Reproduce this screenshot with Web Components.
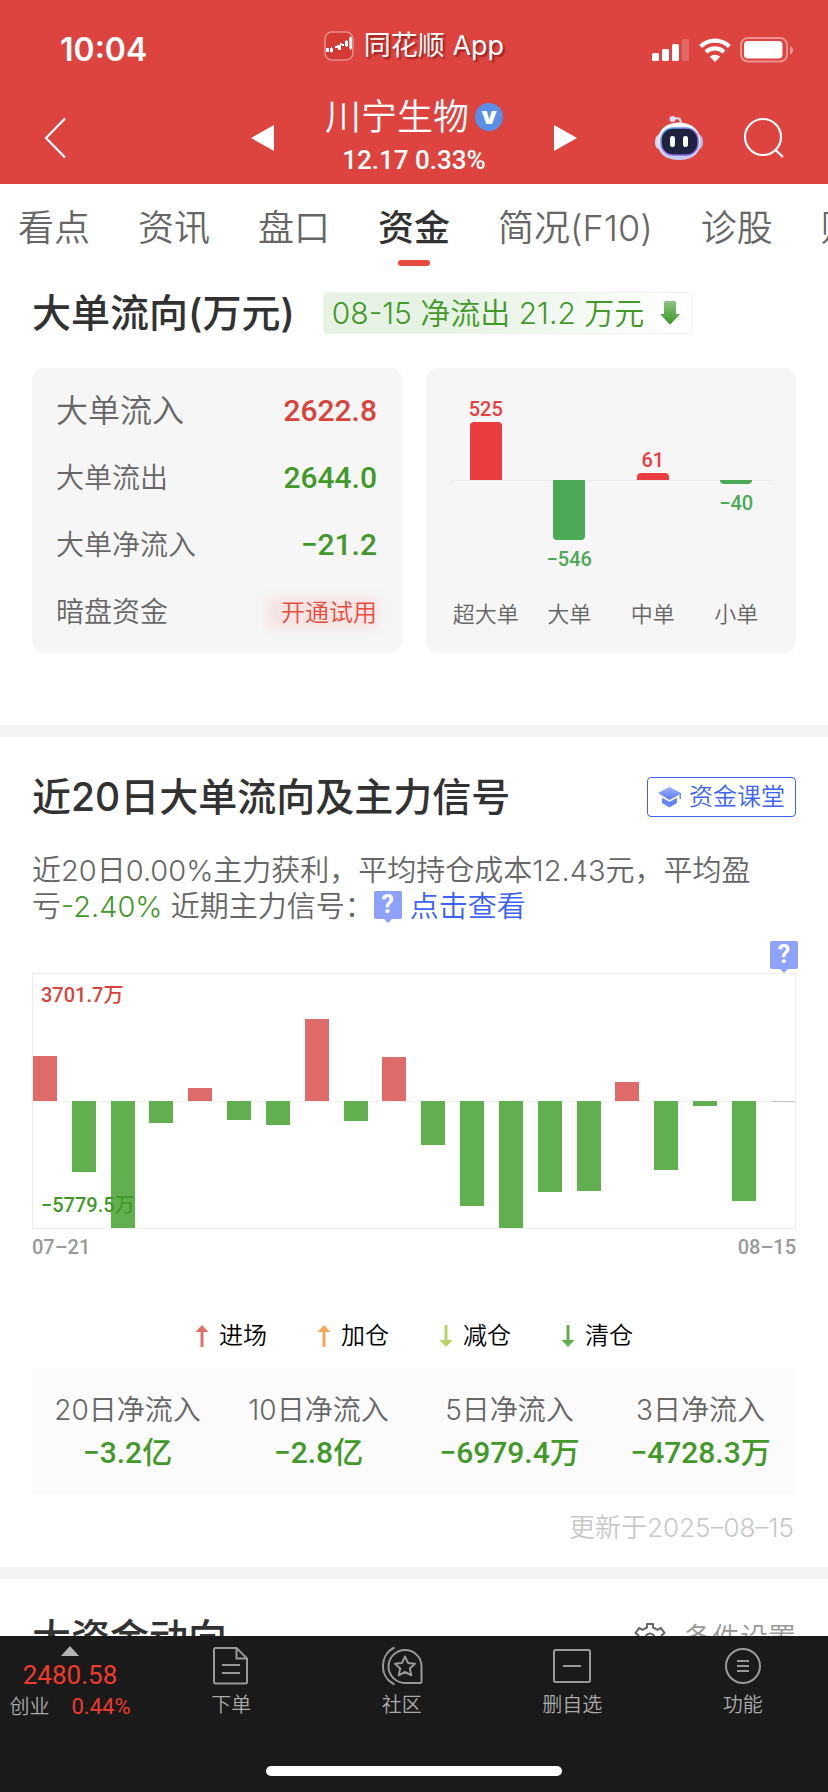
<!DOCTYPE html>
<html lang="zh-CN">
<head>
<meta charset="utf-8">
<meta name="viewport" content="width=device-width, initial-scale=1">
<title>川宁生物 资金</title>
<style>
  :root {
    --up: #d8433b;
    --down: #42992a;
    --ink: #323232;
    --muted: #666;
    --link: #3d63f5;
    --num: Roboto, "Noto Sans CJK SC", sans-serif;
  }
  body { margin: 0; background: #fff; font-family: Inter, "Noto Sans CJK SC", sans-serif; color: var(--ink); }
</style>
</head>
<body>
<stock-app></stock-app>

<script>
const reset = `
  *, *::before, *::after { box-sizing: border-box; }
  button { font: inherit; color: inherit; background: none; border: 0; padding: 0; margin: 0; cursor: pointer; }
  a { color: inherit; text-decoration: none; }
  svg { display: block; flex: none; }
  h1, h2, p, ul, dl, dt, dd { margin: 0; padding: 0; }
`;
function define(name, css, html, setup) {
  const tpl = document.createElement('template');
  tpl.innerHTML = `<style>${reset}${css}</style>${html}`;
  customElements.define(name, class extends HTMLElement {
    constructor() {
      super();
      this.attachShadow({ mode: 'open' }).append(tpl.content.cloneNode(true));
    }
    connectedCallback() {
      if (setup && !this.ready) { this.ready = true; setup(this, this.shadowRoot); }
    }
  });
}

/* Status bar */
define('status-bar', `
  :host { display: grid; grid-template-columns: 1fr auto 1fr; align-items: center; height: 92px; padding: 8px 34px 0; color: #fff; box-sizing: border-box; }
  .time { font-size: 32px; font-weight: 600; line-height: 40px; padding-left: 26px; }
  .app { display: flex; align-items: center; gap: 10px; font-size: 27px; line-height: 40px; text-shadow: 2px 2px 2px rgba(90,0,0,.55); padding-bottom: 8px; }
  .sys { display: flex; align-items: center; justify-content: flex-end; gap: 9px; }
`, `
  <span class="time">10:04</span>
  <span class="app">
    <svg width="30" height="30" viewBox="0 0 30 30"><rect x="1" y="1" width="28" height="28" rx="7" fill="#d53a34" stroke="#e88d89" stroke-width="1.6"/><g fill="#fff"><path d="M2 17h3v4H2zM11 15h3v2h-3zM13 14h4v5h-3v-3h-1zM16 12h2v1h2v2h-2v-1h-2zM21 10h3v5h-3zM22 9h1v7h-1z"/></g><path d="M6.5 17.500h2v3h-2zM7.500 16v6M25.800 6.500h1.600v11h-1.600zM26.600 5v14" fill="none" stroke="#fff" stroke-width="1"/></svg>
    <span>同花顺 App</span>
  </span>
  <span class="sys">
    <svg width="38" height="24" viewBox="0 0 38 24" fill="#fff"><rect x="0" y="15" width="7" height="8" rx="1.500"/><rect x="10" y="11" width="7" height="12" rx="1.500"/><rect x="20" y="6" width="7" height="17" rx="1.500"/><rect x="30" y="1" width="7" height="22" rx="1.500" opacity=".2"/></svg>
    <svg width="32" height="24" viewBox="0 0 32 24"><g fill="none" stroke="#fff" stroke-width="4.200"><path d="M1.600 8.600a20.500 20.500 0 0 1 28.800 0"/><path d="M7 14a13 13 0 0 1 18 0"/></g><path d="M16 24l-5.200-5.200a7.500 7.500 0 0 1 10.400 0z" fill="#fff"/></svg>
    <svg width="54" height="26" viewBox="0 0 54 26"><rect x="1" y="1" width="46" height="23.500" rx="7" fill="none" stroke="#fff" stroke-opacity=".42" stroke-width="2"/><rect x="4" y="4" width="38.500" height="17.500" rx="4" fill="#fff"/><path d="M50 9c4 1.500 4 7 0 8.500z" fill="#fff" opacity=".45"/></svg>
  </span>
`);

/* Stock title with previous / next controls */
define('stock-nav', `
  :host { display: grid; grid-template-columns: 1fr auto 1fr; align-items: center; height: 92px; padding: 0 44px; color: #fff; }
  .mid { display: grid; grid-template-columns: auto 188px auto; align-items: center; gap: 46px; }
  .name { text-align: center; padding-bottom: 6px; }
  h1 { display: flex; align-items: center; justify-content: center; gap: 6px; font-size: 36px; line-height: 50px; font-weight: 350; white-space: nowrap; }
  .v { width: 28px; height: 28px; border-radius: 50%; background: #5a8fe8; font-size: 24px; line-height: 26px; font-weight: 900; text-align: center; }
  .price { font: 500 26px/36px var(--num); white-space: nowrap; }
  .tools { display: flex; align-items: center; justify-content: flex-end; gap: 40px; }
`, `
  <button aria-label="返回"><svg width="22" height="42" viewBox="0 0 22 42" fill="none" stroke="#fff" stroke-width="2.200"><path d="M21 1.500L2 21l19 19.500"/></svg></button>
  <div class="mid">
    <button aria-label="上一只"><svg width="23" height="26" viewBox="0 0 23 26"><path d="M23 0v26L0 13z" fill="#fff"/></svg></button>
    <div class="name">
      <h1>川宁生物<span class="v">v</span></h1>
      <div class="price">12.17 0.33%</div>
    </div>
    <button aria-label="下一只"><svg width="23" height="26" viewBox="0 0 23 26"><path d="M0 0v26l23-13z" fill="#fff"/></svg></button>
  </div>
  <div class="tools">
    <button aria-label="智能助手"><svg width="50" height="46" viewBox="0 0 50 46"><defs><linearGradient id="s" x2="0" y2="1"><stop offset="0" stop-color="#fff"/><stop offset="1" stop-color="#c5c9ec"/></linearGradient><linearGradient id="e" x2="1" y2="1"><stop offset="0" stop-color="#58b9e8"/><stop offset=".5" stop-color="#9a6cf0"/><stop offset="1" stop-color="#6d5bd8"/></linearGradient></defs><path d="M20 4c5-2 7 0 7 5" fill="none" stroke="#d9dcf3" stroke-width="2"/><circle cx="18.500" cy="4" r="3" fill="#dadcf4"/><ellipse cx="4.500" cy="27" rx="3.500" ry="7" fill="#d7d9f3"/><ellipse cx="45.500" cy="27" rx="3.500" ry="7" fill="#b9bce8"/><path d="M25 7.500C39 7.500 46.500 16 46.500 27S39 45 25 45 3.500 38 3.500 27 11 7.500 25 7.500z" fill="url(#s)"/><rect x="7" y="13" width="37" height="27" rx="12" fill="#1e2340" stroke="url(#e)" stroke-width="1.500"/><rect x="16" y="21" width="5" height="11" rx="2.300" fill="#fff"/><rect x="29" y="21" width="5" height="11" rx="2.300" fill="#fff"/></svg></button>
    <button aria-label="搜索"><svg width="40" height="42" viewBox="0 0 40 42" fill="none" stroke="#fff" stroke-width="2.200"><circle cx="19" cy="20" r="18"/><path d="M31.500 33l7.500 7"/></svg></button>
  </div>
`);

/* Section tabs */
define('tab-bar', `
  :host { display: block; overflow: hidden; }
  nav { display: flex; gap: 48px; padding: 18px 0 4px 18px; }
  a { flex: none; display: flex; flex-direction: column; align-items: center; gap: 6px; font-size: 36px; line-height: 52px; font-weight: 350; color: var(--muted); white-space: nowrap; }
  a::after { content: ""; width: 32px; height: 6px; border-radius: 3px; }
  a[aria-current] { color: var(--ink); font-weight: 500; }
  a[aria-current]::after { background: #e84c3d; }
`, `<nav>
  <a href="#kd">看点</a><a href="#zx">资讯</a><a href="#pk">盘口</a><a href="#zj" aria-current="page">资金</a><a href="#f10">简况(F10)</a><a href="#zg">诊股</a><a href="#cw">财务</a>
</nav>`);

/* White content block with a title line and an extra control */
define('content-panel', `
  :host { display: block; padding: 0 32px; }
  header { display: flex; align-items: center; min-height: 40px; }
  h2 { font-size: 39px; line-height: 40px; font-weight: 500; white-space: nowrap; }
  :host([spread]) header { justify-content: space-between; }
  :host(:not([spread])) header { gap: 28px; }
`, `<header><h2><slot name="title"></slot></h2><slot name="extra"></slot></header><slot></slot>`);

define('flow-badge', `
  :host { display: flex; align-items: center; gap: 16px; height: 42px; padding: 0 12px 0 8px; border: 1px solid #edf5eb; border-radius: 4px; background: linear-gradient(100deg, #e6f2e4 35%, #fff 95%); color: var(--down); font-size: 30px; line-height: 40px; font-weight: 350; white-space: nowrap; box-sizing: border-box; }
`, `<slot></slot><svg width="20" height="24" viewBox="0 0 20 24"><defs><linearGradient id="g" x2="0" y2="1"><stop offset="0" stop-color="#8cc482"/><stop offset="1" stop-color="#3b9724"/></linearGradient></defs><path d="M5.500 0h9Q16 0 16 1.500V13h4L11 22.800q-1 1-2 0L0 13h4V1.500Q4 0 5.500 0z" fill="url(#g)"/></svg>`);

/* In and out totals */
define('flow-totals', `
  :host { display: block; padding: 9px 25px 8px 24px; border-radius: 12px; background: #f6f6f6; }
  dl > div { display: flex; align-items: center; justify-content: space-between; height: 67px; }
  dt { font-size: 28px; line-height: 40px; font-weight: 350; color: var(--muted); }
  div:first-child dt { font-size: 32px; }
  dd { font: 500 30px/40px var(--num); color: var(--down); }
  .up { color: var(--up); }
  button { position: relative; font: 350 24px/40px Inter, "Noto Sans CJK SC", sans-serif; color: #e84c3d; padding-left: 18px; }
  button::before { content: ""; position: absolute; inset: 4px 0 4px 4px; background: rgba(240,80,70,.1); filter: blur(6px); }
  button span { position: relative; }
`, `<dl>
  <div><dt>大单流入</dt><dd class="up">2622.8</dd></div>
  <div><dt>大单流出</dt><dd>2644.0</dd></div>
  <div><dt>大单净流入</dt><dd>−21.2</dd></div>
  <div><dt>暗盘资金</dt><dd><button><span>开通试用</span></button></dd></div>
</dl>`);

/* Net flow by order size; data attribute: name:value:barHeight */
define('order-chart', `
  :host { display: grid; grid-template-columns: repeat(4, 1fr); padding: 0 18px; border-radius: 12px; background: #f6f6f6; position: relative; }
  :host::before { content: ""; position: absolute; left: 24px; right: 24px; top: 112px; height: 1px; background: #ededed; }
  .col { display: flex; flex-direction: column; align-items: center; font: 500 20px/26px var(--num); position: relative; }
  .pos, .neg { display: flex; flex-direction: column; align-items: center; height: 112px; }
  .pos { justify-content: flex-end; color: #eb3d40; }
  .neg { gap: 6px; color: #4ca956; }
  .bar { width: 32px; background: currentColor; border-radius: 4px 4px 0 0; }
  .neg .bar { border-radius: 0 0 4px 4px; }
  .cat { font: 350 22px/40px "Noto Sans CJK SC", sans-serif; color: var(--muted); }
`, ``, (el, root) => {
  for (const item of el.getAttribute('data').split(',')) {
    const [name, value, h] = item.split(':');
    const up = !value.startsWith('−');
    const col = document.createElement('div');
    col.className = 'col';
    const bar = `<span class="bar" style="height:${h}px"></span>`;
    col.innerHTML = `<div class="pos">${up ? `<span>${value}</span>${bar}` : ''}</div><div class="neg">${up ? '' : `${bar}<span>${value}</span>`}</div><div class="cat">${name}</div>`;
    root.append(col);
  }
});

define('help-tip', `
  :host { display: inline-block; vertical-align: top; }
  button { position: relative; display: block; width: 28px; height: 28px; margin-bottom: 3px; border-radius: 2px; background: #8ea2fa; color: #fff; font: 700 25px/28px Roboto, sans-serif; text-align: center; }
  button::after { content: ""; position: absolute; left: 10px; top: 28px; border: 4px solid transparent; border-top-color: #8ea2fa; border-bottom: 0; }
`, `<button aria-label="说明">?</button>`);

define('class-button', `
  :host { display: block; }
  button { display: flex; align-items: center; gap: 8px; height: 40px; padding: 0 10px; border: 1px solid var(--link); border-radius: 4px; color: var(--link); font-size: 24px; line-height: 38px; font-weight: 350; white-space: nowrap; }
`, `<button><svg width="23" height="22" viewBox="0 0 23 22"><defs><linearGradient id="c" x2="0" y2="1"><stop offset="0" stop-color="#9db2fb"/><stop offset="1" stop-color="#5b7bf7"/></linearGradient></defs><path d="M11.500 1L23 7v6h-1.500V8.500L11.500 14 0 7z" fill="url(#c)"/><path d="M4 11.800l7.500 4 7.500-4V17l-7.500 4.500L4 17z" fill="#6785f8"/></svg><slot></slot></button>`);

define('signal-note', `
  :host { display: block; margin-top: 36px; padding-right: 30px; font-size: 29px; line-height: 36px; font-weight: 350; color: var(--muted); }
  .down { color: var(--down); }
  help-tip { margin: 2px 8px 0 0; height: 32px; }
  a { color: var(--link); }
`, `<p>近20日0.00%主力获利，平均持仓成本12.43元，平均盈亏<span class="down">-2.40%</span> 近期主力信号：<help-tip></help-tip><a href="#signal">点击查看</a></p>`);

/* Twenty-day bars around a zero line; positive values rise, negative values fall */
define('history-chart', `
  :host { display: block; font: 500 20px/28px var(--num); }
  .plot { position: relative; display: flex; justify-content: space-between; height: 256px; border: 1px solid #ececec; }
  .plot::before { content: ""; position: absolute; left: 0; right: 0; top: 127px; height: 1px; background: #f2f2f2; }
  .day { position: relative; width: 24px; display: flex; flex-direction: column; }
  .day i { display: block; }
  .max, .min { position: absolute; left: 8px; }
  .max { top: 7px; color: var(--up); }
  .min { bottom: 9px; color: var(--down); }
  .dates { display: flex; justify-content: space-between; margin-top: 4px; color: #999; }
`, `<div class="plot"></div><div class="dates"><span>07–21</span><span>08–15</span></div>`, (el, root) => {
  const plot = root.querySelector('.plot');
  for (const v of el.getAttribute('bars').split(',').map(Number)) {
    const day = document.createElement('div');
    day.className = 'day';
    day.innerHTML = `<i style="height:${127 - Math.max(v, 0)}px"></i><i style="height:${Math.abs(v)}px;background:${v > 0 ? '#de6b69' : v < -1 ? '#62af4f' : '#bcc9b8'}"></i>`;
    plot.append(day);
  }
  plot.insertAdjacentHTML('beforeend', '<span class="max">3701.7万</span><span class="min">−5779.5万</span>');
});

define('signal-legend', `
  :host { display: block; }
  ul { display: flex; justify-content: center; gap: 50px; margin-top: 59px; list-style: none; font-size: 24px; line-height: 32px; font-weight: 350; color: #000; }
  li { display: flex; align-items: center; gap: 10px; }
`, `<ul>
  <li><svg width="14" height="24" viewBox="0 0 14 24"><path d="M7 1l6.500 7H8.500v15h-3V8H.5z" fill="#e0706c"/></svg>进场</li>
  <li><svg width="14" height="24" viewBox="0 0 14 24"><path d="M7 1l6.500 7H8.500v15h-3V8H.5z" fill="#f2a65e"/></svg>加仓</li>
  <li><svg width="14" height="24" viewBox="0 0 14 24"><path d="M7 23l6.500-7H8.500V1h-3v15H.5z" fill="#b9d363"/></svg>减仓</li>
  <li><svg width="14" height="24" viewBox="0 0 14 24"><path d="M7 23l6.500-7H8.500V1h-3v15H.5z" fill="#62af4f"/></svg>清仓</li>
</ul>`);

define('period-stats', `
  :host { display: block; }
  dl { display: grid; grid-template-columns: repeat(4, 1fr); margin-top: 16px; padding: 22px 0 18px; background: #fbfbfb; text-align: center; }
  dt { font-size: 28px; line-height: 40px; font-weight: 350; color: var(--muted); }
  dd { font: 500 30px/46px var(--num); color: var(--down); }
  p { margin: 14px 2px 0 0; font-size: 26px; line-height: 40px; font-weight: 350; color: #c8c8c8; text-align: right; }
`, `<dl>
  <div><dt>20日净流入</dt><dd>−3.2亿</dd></div>
  <div><dt>10日净流入</dt><dd>−2.8亿</dd></div>
  <div><dt>5日净流入</dt><dd>−6979.4万</dd></div>
  <div><dt>3日净流入</dt><dd>−4728.3万</dd></div>
</dl><p>更新于2025–08–15</p>`);

define('settings-button', `
  :host { display: block; }
  button { display: flex; align-items: center; gap: 18px; font-size: 28px; line-height: 40px; font-weight: 350; color: #999; }
`, `<button><svg width="32" height="32" viewBox="0 0 32 32" fill="none" stroke="#666" stroke-width="2"><path d="M13 2h6v3.500l4.500 2.300L27 6l3.500 5-3 2.500v5l3 2.500-3.500 5-3.500-1.800-4.500 2.300V30h-6v-3.500l-4.500-2.300L5 26l-3.500-5 3-2.500v-5l-3-2.500L5 6l3.500 1.800L13 5.500z" stroke-linejoin="round"/><circle cx="16" cy="16" r="4.500"/></svg><slot></slot></button>`);

/* Bottom toolbar */
define('bottom-bar', `
  :host { display: flex; flex-direction: column; justify-content: space-between; align-items: center; height: 156px; padding: 10px 0 16px; background: #1a1a1a; color: #aaa; box-sizing: border-box; }
  nav { display: grid; grid-template-columns: 146px repeat(4, 1fr); align-items: start; width: 100%; font-size: 20px; font-weight: 350; }
  nav button { display: flex; flex-direction: column; align-items: center; gap: 5px; line-height: 28px; }
  .index { gap: 4px; padding-right: 6px; }
  .value { font: 400 26px/30px var(--num); color: #f03a2c; }
  .row { display: flex; align-items: center; gap: 22px; line-height: 26px; }
  .row span + span { font: 400 22px/26px var(--num); color: #f03a2c; }
  .home { width: 296px; height: 10px; border-radius: 5px; background: #fff; }
`, `<nav>
  <button class="index"><svg width="18" height="10" viewBox="0 0 18 10"><path d="M9 0l9 10H0z" fill="#b4b4b4"/></svg><span class="value">2480.58</span><span class="row"><span>创业</span><span>0.44%</span></span></button>
  <button><svg width="40" height="40" viewBox="0 0 40 40" fill="none" stroke="#999" stroke-width="2"><path d="M5 2h20.500L36 12.500V36a1.500 1.500 0 0 1-1.500 1.500H4.500A1.500 1.500 0 0 1 3 36V3.500A1.500 1.500 0 0 1 5 2zM25.500 2v10.500H36M11 19h18M11 27h18"/></svg>下单</button>
  <button><svg width="42" height="40" viewBox="0 0 42 40" fill="none" stroke="#999" stroke-width="2"><path d="M13.500 1.500C-2 9-2 31 13.500 38.500M24 4a16.500 16.500 0 1 0 0 33h15a1.500 1.500 0 0 0 1.500-1.500V20A16.500 16.500 0 0 0 24 4z"/><path d="M24 10.500l3 6.400 7 .8-5.200 4.700 1.500 6.900-6.300-3.400-6.300 3.400 1.500-6.900-5.200-4.700 7-.8z" stroke-linejoin="round"/></svg>社区</button>
  <button><svg width="40" height="40" viewBox="0 0 40 40" fill="none" stroke="#999" stroke-width="2"><rect x="2" y="4" width="36" height="32" rx="1.500"/><path d="M11 20h18"/></svg>删自选</button>
  <button><svg width="40" height="40" viewBox="0 0 40 40" fill="none" stroke="#999" stroke-width="2"><circle cx="20" cy="20" r="17"/><path d="M14 15h12M14 20h12M14 25h12"/></svg>功能</button>
</nav><span class="home"></span>`);

define('stock-app', `
  :host { display: grid; grid-template-rows: auto minmax(0, 1fr) auto; height: 100vh; }
  .top { background: #dd4440; }
  main { overflow-y: auto; overflow-x: hidden; scrollbar-width: none; }
  .cards { display: grid; grid-template-columns: 1fr 1fr; gap: 24px; margin-top: 34px; }
  .orders { padding-top: 22px; padding-bottom: 72px; }
  .history { padding-top: 40px; padding-bottom: 19px; border-top: 12px solid #f4f4f4; }
  .funds { padding-top: 39px; padding-bottom: 40px; border-top: 12px solid #f4f4f4; }
  .tip { display: flex; justify-content: flex-end; margin: 16px -2px 0 0; padding-bottom: 1px; }
`, `
  <div class="top"><status-bar></status-bar><stock-nav></stock-nav></div>
  <main>
    <tab-bar></tab-bar>
    <content-panel class="orders">
      <span slot="title">大单流向(万元)</span>
      <flow-badge slot="extra">08-15 净流出 21.2 万元</flow-badge>
      <div class="cards">
        <flow-totals></flow-totals>
        <order-chart data="超大单:525:58,大单:−546:60,中单:61:7,小单:−40:4"></order-chart>
      </div>
    </content-panel>
    <content-panel class="history" spread>
      <span slot="title">近20日大单流向及主力信号</span>
      <class-button slot="extra">资金课堂</class-button>
      <signal-note></signal-note>
      <div class="tip"><help-tip></help-tip></div>
      <history-chart bars="45,-71,-127,-22,13,-19,-24,82,-20,44,-44,-105,-127,-91,-90,19,-69,-5,-100,-1"></history-chart>
      <signal-legend></signal-legend>
      <period-stats></period-stats>
    </content-panel>
    <content-panel class="funds" spread>
      <span slot="title">大资金动向</span>
      <settings-button slot="extra">条件设置</settings-button>
    </content-panel>
  </main>
  <bottom-bar></bottom-bar>
`);
</script>
</body>
</html>
